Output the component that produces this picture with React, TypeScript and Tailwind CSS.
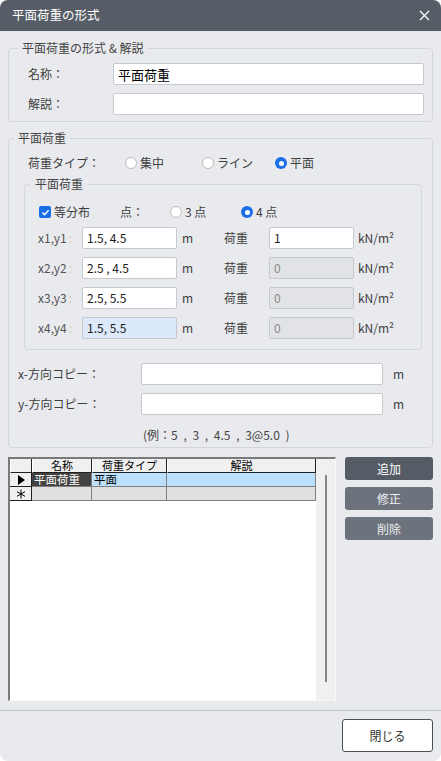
import React from 'react'

const FONT = { fontFamily: '"Noto Sans CJK JP", "Noto Sans", sans-serif' }
const GRID_FONT = { fontFamily: '"Noto Sans CJK JP", sans-serif' }

function Radio({ checked, label, className = '' }: { checked?: boolean; label: string; className?: string }) {
  return (
    <div className={`flex items-center gap-[3px] ${className}`}>
      {checked ? (
        <span className="w-[12px] h-[12px] rounded-full bg-[#1a6ee6] flex items-center justify-center">
          <span className="w-[5px] h-[5px] rounded-full bg-white" />
        </span>
      ) : (
        <span className="w-[12px] h-[12px] rounded-full bg-white border border-[#b9bcc1]" />
      )}
      <span>{label}</span>
    </div>
  )
}

function Input({ value = '', className = '', disabled, active }: { value?: string; className?: string; disabled?: boolean; active?: boolean }) {
  const bg = disabled ? 'bg-[#e2e3e6] text-[#8a8a8a]' : active ? 'bg-[#dce9fb] text-[#1a1a1a]' : 'bg-white text-[#1a1a1a]'
  return (
    <div className={`h-[22px] border border-[#c6c9cd] rounded-[2px] px-[4px] flex items-center text-[12px] leading-none ${bg} ${className}`}>
      {value}
    </div>
  )
}

const rows = [
  { label: 'x1,y1', value: '1.5, 4.5', load: '1' },
  { label: 'x2,y2', value: '2.5 , 4.5', load: '0' },
  { label: 'x3,y3', value: '2.5, 5.5', load: '0' },
  { label: 'x4,y4', value: '1.5, 5.5', load: '0' },
]

export default function App() {
  return (
    <div className="w-[441px] h-[761px] bg-white" style={FONT}>
      <div className="w-full h-full rounded-[8px] overflow-hidden bg-[#e9eaee] flex flex-col text-[12px] text-[#3e3e3e]">
        {/* title bar */}
        <div className="h-[31px] bg-[#565d66] flex items-center justify-between pl-[12px] pr-[11px] shrink-0">
          <span className="text-white text-[12.5px]">平面荷重の形式</span>
          <svg width="11" height="11" viewBox="0 0 11 11">
            <path d="M1 1 L10 10 M10 1 L1 10" stroke="#fff" strokeWidth="1.3" />
          </svg>
        </div>

        <div className="px-2 flex flex-col">
          {/* group 1 */}
          <fieldset className="mt-[9px] border border-[#d3d6da] rounded-[4px] pr-[8px] pt-[7px] pb-[6px]">
            <legend className="ml-[9px] px-[4px] leading-4 text-[#444]">平面荷重の形式 &amp; 解説</legend>
            <div className="flex flex-col gap-[8px] pl-[19px]">
              <div className="flex items-center">
                <span className="w-[85px]">名称：</span>
                <Input value="平面荷重" className="flex-1 text-[13px] text-black" />
              </div>
              <div className="flex items-center">
                <span className="w-[85px]">解説：</span>
                <Input className="flex-1" />
              </div>
            </div>
          </fieldset>

          {/* group 2 */}
          <fieldset className="mt-[8px] border border-[#d3d6da] rounded-[4px] pr-[10px] pt-[7px] pb-[4px]">
            <legend className="ml-[5px] px-[4px] leading-4 text-[#444]">平面荷重</legend>
            <div className="h-[20px] flex items-center pl-[19px]">
              <span className="w-[97px]">荷重タイプ：</span>
              <Radio label="集中" className="w-[77px]" />
              <Radio label="ライン" className="w-[73px]" />
              <Radio checked label="平面" />
            </div>

            <fieldset className="mt-[3px] ml-[15px] border border-[#d3d6da] rounded-[4px] pr-[8px] pt-[10px] pb-[10px]">
              <legend className="ml-[5px] px-[5px] leading-4 text-[#444]">平面荷重</legend>
              <div className="pl-[13px]">
                <div className="h-[20px] flex items-center">
                  <div className="flex items-center gap-[3px] w-[82px] pl-[1px]">
                    <span className="w-[12px] h-[12px] rounded-[2px] bg-[#1a6ee6] flex items-center justify-center">
                      <svg width="9" height="9" viewBox="0 0 9 9">
                        <path d="M1.5 4.6 L3.6 6.7 L7.6 2.2" stroke="#fff" strokeWidth="1.5" fill="none" />
                      </svg>
                    </span>
                    <span>等分布</span>
                  </div>
                  <span className="w-[50px]">点：</span>
                  <Radio label="3 点" className="w-[71px]" />
                  <Radio checked label="4 点" />
                </div>
                <div className="mt-[5px] flex flex-col gap-[8px]">
                  {rows.map((r, i) => (
                    <div key={r.label} className="flex items-center">
                      <span className="w-[44px] text-[#555] whitespace-nowrap">
                        {r.label}<span className="text-[#d6c6ae] ml-[2px]">:</span>
                      </span>
                      <Input value={r.value} active={i === 3} className="w-[95px]" />
                      <span className="w-[47px] pl-[5px]">m</span>
                      <span className="w-[45px]">荷重</span>
                      <Input value={r.load} disabled={i > 0} className="w-[85px]" />
                      <span className="pl-[4px] whitespace-nowrap">kN/m²</span>
                    </div>
                  ))}
                </div>
              </div>
            </fieldset>

            <div className="mt-[13px] flex flex-col gap-[8px] pl-[9px]">
              <div className="flex items-center">
                <span className="w-[123px]">x-方向コピー：</span>
                <Input className="w-[242px]" />
                <span className="pl-[10px]">m</span>
              </div>
              <div className="flex items-center">
                <span className="w-[123px]">y-方向コピー：</span>
                <Input className="w-[242px]" />
                <span className="pl-[10px]">m</span>
              </div>
            </div>
            <div className="mt-[12px] h-[16px] leading-4 pl-[134px] text-[#444] [word-spacing:3px]">(例：5 , 3 , 4.5 , 3@5.0 )</div>
          </fieldset>

          {/* grid + buttons */}
          <div className="mt-[9px] flex gap-[9px]">
            <div className="w-[328px] h-[244px] border-t-2 border-l-2 border-[#7a7a7a] border-r border-b border-r-[#f8f8f8] border-b-[#f8f8f8] bg-white flex" style={GRID_FONT}>
              <div className="w-[306px] text-[11px] leading-none text-black">
                <div className="flex h-[14px] bg-[#f0f0f0]">
                  {[
                    ['', 'w-[22px]'],
                    ['名称', 'w-[60px]'],
                    ['荷重タイプ', 'w-[75px]'],
                    ['解説', 'flex-1'],
                  ].map(([t, w], i) => (
                    <div key={i} className={`${w} border-r border-b border-[#202020] border-l border-l-white flex items-center justify-center`}>{t}</div>
                  ))}
                </div>
                <div className="flex h-[14px]">
                  <div className="w-[22px] bg-[#f0f0f0] border-r border-b border-[#202020] flex items-center justify-center">
                    <svg width="8" height="10" viewBox="0 0 8 10"><path d="M1 0 L8 5 L1 10 Z" fill="#000" /></svg>
                  </div>
                  <div className="w-[60px] bg-[#424242] text-white text-[11.5px] border-r border-b border-[#808080] flex items-center pl-[2px]">平面荷重</div>
                  <div className="w-[75px] bg-[#bde1fc] text-[11.5px] border-r border-b border-[#808080] flex items-center pl-[2px]">平面</div>
                  <div className="flex-1 bg-[#bde1fc] border-r border-b border-[#808080]" />
                </div>
                <div className="flex h-[14px]">
                  <div className="w-[22px] bg-[#f0f0f0] border-r border-b border-[#202020] flex items-center justify-center">
                    <svg width="10" height="10" viewBox="0 0 10 10">
                      <path d="M5 0.5 V9.5 M1 2.7 L9 7.3 M9 2.7 L1 7.3" stroke="#000" strokeWidth="1" />
                    </svg>
                  </div>
                  <div className="w-[60px] bg-[#e0e0e0] border-r border-b border-[#808080]" />
                  <div className="w-[75px] bg-[#e0e0e0] border-r border-b border-[#808080]" />
                  <div className="flex-1 bg-[#e0e0e0] border-r border-b border-[#808080]" />
                </div>
              </div>
              <div className="flex-1 bg-[#f0f0f0] flex justify-center pt-[16px] pb-[18px]">
                <div className="w-[2px] h-full bg-[#858585]" />
              </div>
            </div>
            <div className="flex-1 flex flex-col gap-[7px]">
              <button className="h-[23px] rounded-[3px] bg-[#555c65] text-white text-[12px]">追加</button>
              <button className="h-[23px] rounded-[3px] bg-[#6c737c] text-[#eceef0] text-[12px]">修正</button>
              <button className="h-[23px] rounded-[3px] bg-[#6c737c] text-[#eceef0] text-[12px]">削除</button>
            </div>
          </div>
        </div>

        <div className="mt-[9px] h-px bg-[#bcc3c8]" />
        <div className="flex justify-end pr-[8px] mt-[8px]">
          <button className="w-[91px] h-[33px] bg-white border border-[#4a4f55] rounded-[3px] text-[12px] text-[#333]">閉じる</button>
        </div>
      </div>
    </div>
  )
}
